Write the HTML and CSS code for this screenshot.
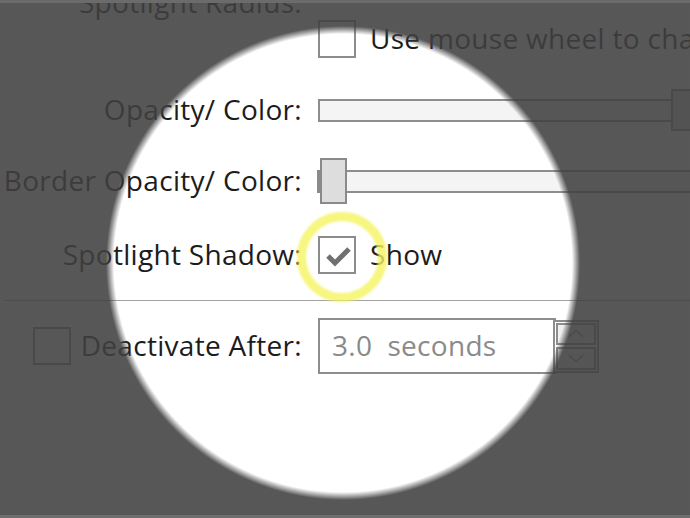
FILE: index.html
```html
<!DOCTYPE html>
<html>
<head>
<meta charset="utf-8">
<link rel="stylesheet" href="styles.css">
</head>
<body>
<div class="screen">
  <div class="form">
    <div class="row r-radius">
      <div class="label">Spotlight Radius:</div>
    </div>
    <div class="row r-wheel">
      <div class="label"></div>
      <div class="ctrl">
        <span class="cb"></span>
        <span class="cbtext">Use mouse wheel to change</span>
      </div>
    </div>
    <div class="row r-opacity">
      <div class="label">Opacity/ Color:</div>
      <div class="ctrl">
        <div class="slider s-opacity">
          <div class="track"></div>
          <div class="thumb"></div>
        </div>
      </div>
    </div>
    <div class="row r-border">
      <div class="label">Border Opacity/ Color:</div>
      <div class="ctrl">
        <div class="slider s-border">
          <div class="track"></div>
          <div class="tick"></div>
          <div class="thumb"></div>
        </div>
      </div>
    </div>
    <div class="row r-shadow">
      <div class="label">Spotlight Shadow:</div>
      <div class="ctrl">
        <span class="cb checked">
          <span class="ring"></span>
          <svg class="check" width="36" height="36" viewBox="0 0 36 36"><path d="M8 18 L15 25 L29 11" fill="none" stroke="#707070" stroke-width="5"/></svg>
        </span>
        <span class="cbtext">Show</span>
      </div>
    </div>
    <div class="sep"></div>
    <div class="row r-deact">
      <div class="label label-cb">
        <span class="cb"></span>
        <span class="ltext">Deactivate After:</span>
      </div>
      <div class="ctrl">
        <div class="spin">
          <div class="spin-input">3.0&nbsp; seconds</div>
          <div class="spin-btns">
            <div class="spin-btn"><svg width="40" height="18" viewBox="0 0 40 18"><path d="M12 12 L20 5 L28 12" fill="none" stroke="#8a8a8a" stroke-width="1.5"/></svg></div>
            <div class="spin-btn"><svg width="40" height="18" viewBox="0 0 40 18"><path d="M12 6 L20 13 L28 6" fill="none" stroke="#8a8a8a" stroke-width="1.5"/></svg></div>
          </div>
        </div>
      </div>
    </div>
  </div>
  <div class="spot"></div>
</div>
</body>
</html>
```
FILE: styles.css
```css
* { box-sizing: border-box; }
html, body { margin: 0; padding: 0; }
body {
  width: 690px;
  height: 518px;
  overflow: hidden;
  background: #ffffff;
  font-family: "Open Sans", "Noto Sans", sans-serif;
  font-size: 28px;
  letter-spacing: 0.3px;
  color: #1c1c1c;
}
.screen {
  position: relative;
  width: 690px;
  height: 518px;
  overflow: hidden;
  background: #ffffff;
}
.form {
  display: flex;
  flex-direction: column;
  margin-top: -13px;
}
.row {
  display: flex;
  align-items: center;
  flex: none;
}
.label {
  width: 302px;
  flex: none;
  text-align: right;
  white-space: nowrap;
  line-height: 1;
  padding-bottom: 3px;
}
.ctrl {
  margin-left: 16px;
  display: flex;
  align-items: center;
  flex: none;
  white-space: nowrap;
}
.r-radius { height: 33px; }
.r-wheel { height: 38px; }
.r-opacity { height: 48px; margin-top: 28px; }
.r-border { height: 50px; margin-top: 22px; }
.r-shadow { height: 40px; margin-top: 29px; }
.sep {
  margin-top: 25px;
  margin-left: 5px;
  height: 1px;
  background: #a3a3a3;
  flex: none;
}
.r-deact { height: 56px; margin-top: 17px; }

.cb {
  position: relative;
  display: block;
  width: 38px;
  height: 38px;
  border: 2px solid #8c8c8c;
  background: #ffffff;
  flex: none;
}
.cbtext { margin-left: 14px; line-height: 1; padding-bottom: 3px; }
.check { position: absolute; left: 0; top: 0; }
.ring {
  position: absolute;
  left: -23px;
  top: -26px;
  width: 90px;
  height: 90px;
  border-radius: 50%;
  border: 9px solid rgba(244, 244, 96, 0.8);
  filter: blur(1.2px);
}

.slider {
  position: relative;
  width: 382px;
  display: flex;
  align-items: center;
}
.s-opacity { height: 42px; }
.s-border { height: 46px; }
.track {
  width: 100%;
  height: 23px;
  border: 2px solid #8d8d8d;
  background: #f4f4f4;
}
.thumb {
  position: absolute;
  top: 0;
  height: 100%;
  background: #dddddd;
  border: 2px solid #8a8a8a;
}
.s-opacity .thumb { left: 353px; width: 28px; }
.s-border .thumb { left: 2px; width: 27px; }
.tick {
  position: absolute;
  left: -1px;
  top: 12px;
  width: 3px;
  height: 23px;
  background: #8a8a8a;
}

.label-cb {
  display: flex;
  align-items: center;
  padding-left: 33px;
  padding-bottom: 0;
}
.ltext { margin-left: auto; line-height: 1; padding-bottom: 3px; }

.spin {
  display: flex;
  align-items: center;
}
.spin-input {
  width: 238px;
  height: 56px;
  border: 2px solid #8d8d8d;
  padding-left: 12px;
  padding-bottom: 3px;
  display: flex;
  align-items: center;
  color: #8a8a8a;
  background: #ffffff;
}
.spin-btns {
  margin-left: -3px;
  width: 46px;
  height: 53px;
  border: 2px solid #8d8d8d;
  padding: 1px;
  display: flex;
  flex-direction: column;
  gap: 2px;
  background: #ffffff;
}
.spin-btn {
  flex: 1;
  border: 2px solid #8d8d8d;
  display: flex;
  align-items: center;
  justify-content: center;
  background: #f0f0f0;
}

.spot {
  position: absolute;
  left: 0;
  top: 0;
  width: 690px;
  height: 518px;
  border-top: 3px solid #6b6b6b;
  border-bottom: 3px solid #6f6f6f;
  background: radial-gradient(circle at 343px 260px, rgba(64,64,64,0) 229px, rgba(64,64,64,0.88) 237px);
  pointer-events: none;
}
```
